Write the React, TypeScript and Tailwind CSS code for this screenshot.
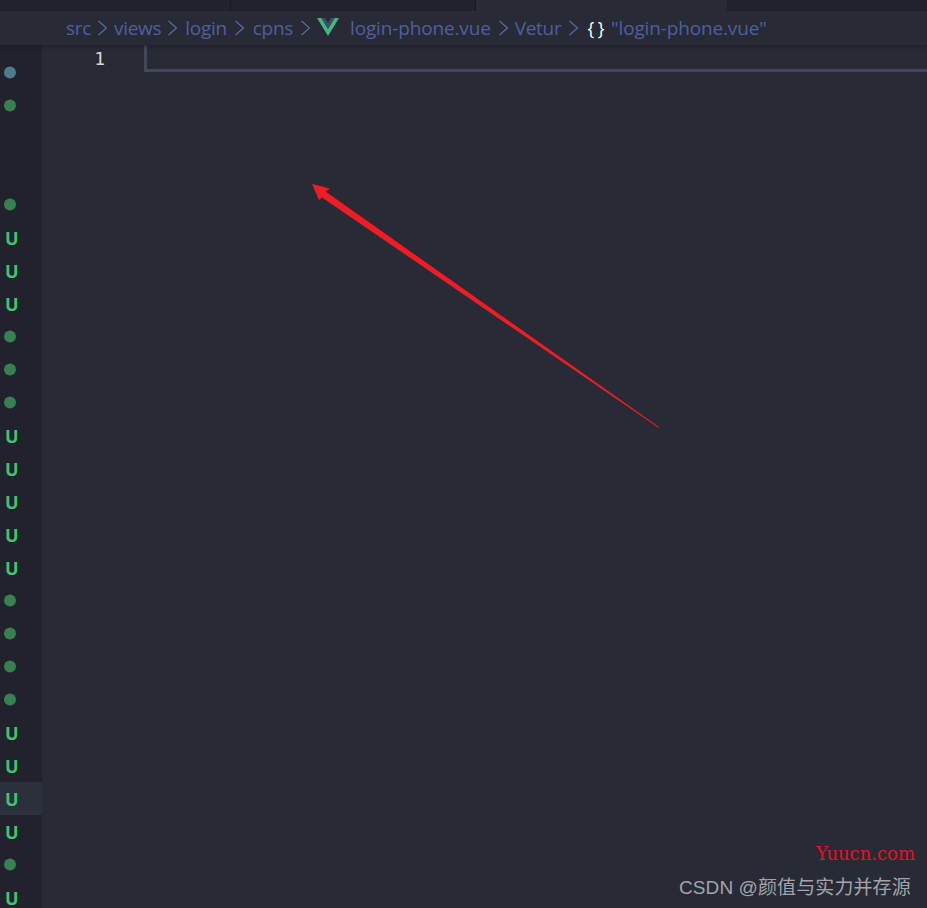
import React from 'react';

type Mark = 'blue' | 'dot' | 'u' | 'none';

const rows: Mark[] = [
  'blue', 'dot', 'none', 'none', 'dot', 'u', 'u', 'u', 'dot', 'dot', 'dot', 'u', 'u',
  'u', 'u', 'u', 'dot', 'dot', 'dot', 'dot', 'u', 'u', 'u', 'u', 'dot', 'u',
];

function Chevron({ className }: { className: string }) {
  return (
    <svg width="11" height="18" viewBox="0 0 11 18" fill="none" className={`shrink-0 ${className}`}>
      <path d="M1.5 2 L9.5 9 L1.5 16" stroke="#5d6aa0" strokeWidth="1.2" />
    </svg>
  );
}

function VueIcon() {
  return (
    <svg width="22" height="18" viewBox="0 0 22 18" className="shrink-0 -translate-y-[1px]">
      <path d="M0 0 H4.4 L11 11 L17.6 0 H22 L11 18 Z" fill="#41b883" />
      <path d="M4.4 0 H8 L11 5 L14 0 H17.6 L11 11 Z" fill="#3b5168" />
    </svg>
  );
}

export default function App() {
  return (
    <div className="relative w-[927px] h-[908px] overflow-hidden bg-[#282a36] font-['Open_Sans','Noto_Sans',sans-serif]">
      {/* Tabs */}
      <div className="flex h-[11px] bg-[#21222c]">
        <div className="w-[231px] border-r border-[#191a21]" />
        <div className="w-[245px] border-r border-[#191a21]" />
        <div className="w-[251px] bg-[#282a36]" />
      </div>

      {/* Breadcrumb */}
      <div className="flex h-[34px] items-center pl-[66px] bg-[#282a36] text-[19px] tracking-[-0.3px] text-[#4f5f9f] shadow-[0_2px_3px_rgba(20,20,28,0.45)] relative z-10">
        <span>src</span>
        <Chevron className="mx-[6px]" />
        <span>views</span>
        <Chevron className="ml-[6px] mr-[7px]" />
        <span>login</span>
        <Chevron className="ml-[7px] mr-[8px]" />
        <span>cpns</span>
        <Chevron className="ml-[7px] mr-[6px]" />
        <VueIcon />
        <span className="ml-[11px] tracking-[-0.15px]">login-phone.vue</span>
        <Chevron className="ml-[7px] mr-[6px]" />
        <span>Vetur</span>
        <Chevron className="ml-[7px] mr-[6px]" />
        <span className="ml-[2px] mr-[7px] text-white text-[18px] tracking-[-0.5px]">{'{ }'}</span>
        <span className="tracking-[-0.15px]">"login-phone.vue"</span>
      </div>

      <div className="flex h-[863px]">
        {/* Explorer git markers */}
        <div className="w-[42px] shrink-0 pt-[11px] bg-[#21222c]">
          {rows.map((mark, i) => (
            <div key={i} className={`flex h-[33px] items-center pl-[4px] ${i === 22 ? 'bg-[#2c2f3c]' : ''}`}>
              {mark === 'blue' && <div className="w-[12px] h-[12px] rounded-full bg-[#4e7b8f] -translate-y-[0.5px]" />}
              {mark === 'dot' && <div className="w-[12px] h-[12px] rounded-full bg-[#37804f] -translate-y-[0.5px]" />}
              {mark === 'u' && (
                <span className="pl-[1px] text-[18px] font-bold leading-none text-[#41c46c] font-['Noto_Sans',sans-serif]">U</span>
              )}
            </div>
          ))}
        </div>

        {/* Editor */}
        <div className="flex flex-1 items-start">
          <div className="w-[63px] pt-[2px] text-right text-[18px] leading-[24px] text-[#d8d8d4] font-['DejaVu_Sans_Mono',monospace]">
            1
          </div>
          <div className="ml-[39px] h-[27px] flex-1 border-l-[3px] border-b-[3px] border-[#44475a]" />
        </div>
      </div>

      {/* Red annotation arrow */}
      <svg width="927" height="908" viewBox="0 0 927 908" className="absolute left-0 top-0 pointer-events-none">
        <path d="M312 184 L330 188.5 L325.5 191.5 L659 427 L658.5 427.8 L322 197.5 L319 200 Z" fill="#f01c24" />
      </svg>

      {/* Watermarks */}
      <div className="absolute right-[12px] top-[844px] text-[18px] leading-[20px] text-[#f00d1e] font-['DejaVu_Serif',serif]">
        Yuucn.com
      </div>
      <div className="absolute left-[679px] top-[876px] text-[19px] leading-[24px] tracking-[0.1px] text-[#a3a5a9] font-['Liberation_Sans','Noto_Sans_CJK_SC',sans-serif]">
        CSDN @颜值与实力并存源
      </div>
    </div>
  );
}
